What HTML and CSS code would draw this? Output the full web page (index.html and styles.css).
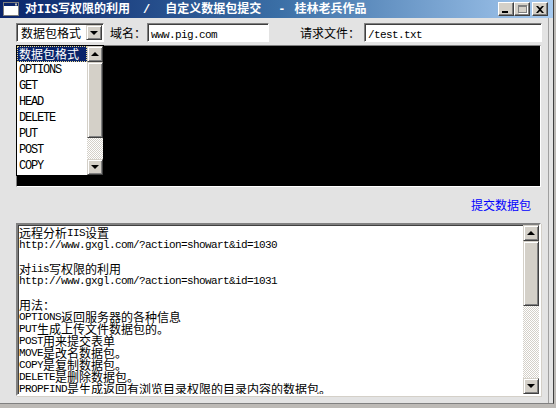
FILE: index.html
```html
<!DOCTYPE html>
<html lang="zh-CN">
<head>
    <meta charset="UTF-8">
    <title>对IIS写权限的利用</title>
    <link rel="stylesheet" href="styles.css">
</head>
<body>
    <div class="window">
        <div class="titlebar">
            <svg class="app-icon" width="16" height="14" viewBox="0 0 16 14">
                <rect x="0.5" y="0.5" width="15" height="13" fill="#fff" stroke="#808080"/>
                <rect x="1" y="1" width="14" height="3" fill="#0a246a"/>
                <rect x="12" y="1.5" width="2" height="2" fill="#c0c0c0"/>
            </svg>
            <div class="title-text">对<span class="en">IIS</span>写权限的利用<span class="slash">/</span>自定义数据包提交<span class="dash">-</span>桂林老兵作品</div>
            <div class="caption-btns">
                <span class="cbtn btn-min"><i></i></span>
                <span class="cbtn btn-max"><i></i></span>
                <span class="cbtn btn-close">
                    <svg width="8" height="7" viewBox="0 0 8 7"><path d="M0 0h2l2 2 2-2h2L5 3.5 8 7H6L4 5 2 7H0l3-3.5z" fill="#000"/></svg>
                </span>
            </div>
        </div>

        <div class="client">
            <div class="toolbar">
                <div class="combo">
                    <span class="combo-text">数据包格式</span>
                    <span class="combo-btn"><i class="arrow-down"></i></span>
                    <div class="combo-list">
                        <ul>
                            <li class="selected">数据包格式</li>
                            <li class="m">OPTIONS</li>
                            <li class="m">GET</li>
                            <li class="m">HEAD</li>
                            <li class="m">DELETE</li>
                            <li class="m">PUT</li>
                            <li class="m">POST</li>
                            <li class="m">COPY</li>
                        </ul>
                        <div class="vscroll">
                            <span class="sbtn"><i class="arrow-up"></i></span>
                            <span class="thumb list-thumb"></span>
                            <span class="track"></span>
                            <span class="sbtn"><i class="arrow-down"></i></span>
                        </div>
                    </div>
                </div>
                <label class="lbl lbl-host">域名：</label>
                <div class="field field-host"><span class="m">www.pig.com</span></div>
                <label class="lbl lbl-file">请求文件：</label>
                <div class="field field-file"><span class="m">/test.txt</span></div>
            </div>

            <div class="screen"></div>

            <div class="actions">
                <a href="javascript:;" class="submit">提交数据包</a>
            </div>

            <div class="output">
                <div class="lines">
                    <div class="line">远程分析<span class="m">IIS</span>设置</div>
                    <div class="line"><span class="m">http://www.gxgl.com/?action=showart&amp;id=1030</span></div>
                    <div class="line"></div>
                    <div class="line">对<span class="m">iis</span>写权限的利用</div>
                    <div class="line"><span class="m">http://www.gxgl.com/?action=showart&amp;id=1031</span></div>
                    <div class="line"></div>
                    <div class="line">用法：</div>
                    <div class="line"><span class="m">OPTIONS</span>返回服务器的各种信息</div>
                    <div class="line"><span class="m">PUT</span>生成上传文件数据包的。</div>
                    <div class="line"><span class="m">POST</span>用来提交表单</div>
                    <div class="line"><span class="m">MOVE</span>是改名数据包。</div>
                    <div class="line"><span class="m">COPY</span>是复制数据包。</div>
                    <div class="line"><span class="m">DELETE</span>是删除数据包。</div>
                    <div class="line"><span class="m">PROPFIND</span>是生成返回有浏览目录权限的目录内容的数据包。</div>
                </div>
                <div class="vscroll">
                    <span class="sbtn"><i class="arrow-up"></i></span>
                    <span class="thumb out-thumb"></span>
                    <span class="track"></span>
                    <span class="sbtn"><i class="arrow-down"></i></span>
                </div>
            </div>
        </div>
    </div>
</body>
</html>
```

FILE: styles.css
```css
* {
    padding: 0;
    margin: 0;
    box-sizing: border-box;
}

ul,
li {
    list-style: none;
}

a {
    text-decoration: none;
}

body {
    width: 556px;
    height: 408px;
    overflow: hidden;
    background: #bdbab6;
    font: 12px "Noto Sans CJK SC", "Noto Sans", sans-serif;
    color: #000;
}

.m {
    font-family: "Liberation Mono", "DejaVu Sans Mono", monospace;
    font-size: 11px;
    letter-spacing: -0.6px;
}

.window {
    width: 554px;
    height: 404px;
    display: flex;
    flex-direction: column;
    background: #e3e3e3;
    border-right: 1px solid #404040;
    border-bottom: 1px solid #808080;
}

/* 标题栏 */
.titlebar {
    height: 18px;
    display: flex;
    align-items: center;
    padding: 0 5px 0 3px;
    background: linear-gradient(to right, #0a246a 0%, #3a6ea5 50%, #a6caf0 100%);
    color: #fff;
    font-weight: bold;
}

.app-icon {
    flex: none;
}

.title-text {
    margin-left: 6px;
    flex: 1;
    white-space: nowrap;
    line-height: 18px;
}

.title-text .en {
    font-family: "Liberation Mono", monospace;
    font-size: 12px;
    letter-spacing: -0.2px;
}

.title-text .slash {
    font-family: "Liberation Mono", monospace;
    margin: 0 15px 0 13px;
}

.title-text .dash {
    font-family: "Liberation Mono", monospace;
    margin: 0 9px 0 17px;
}

.caption-btns {
    display: flex;
}

.cbtn {
    width: 16px;
    height: 14px;
    background: #d4d0c8;
    border: 1px solid;
    border-color: #fff #404040 #404040 #fff;
    box-shadow: inset -1px -1px #808080;
    display: flex;
    align-items: center;
    justify-content: center;
}

.btn-close {
    margin-left: 2px;
}

.btn-min i {
    width: 6px;
    height: 2px;
    background: #000;
    margin-top: 6px;
    margin-left: -2px;
}

.btn-max i {
    width: 9px;
    height: 8px;
    border: 1px solid #808080;
    border-top-width: 2px;
    box-shadow: 1px 1px #fff;
}

/* 客户区 */
.client {
    flex: 1;
    padding: 5px 0 0 16px;
    border-left: 3px solid #f1e8e8;
    margin-left: -3px;
    border-right: 1px solid #a0a0a0;
    margin-right: 4px;
}

.toolbar {
    display: flex;
    align-items: center;
    height: 19px;
    position: relative;
    z-index: 5;
}

.combo {
    width: 88px;
    height: 19px;
    position: relative;
    background: #fff;
    border: 1px solid;
    border-color: #808080 #fff #fff #808080;
    box-shadow: inset 1px 1px #404040;
    display: flex;
    align-items: center;
}

.combo-text {
    padding-left: 4px;
    flex: 1;
    line-height: 17px;
}

.combo-btn {
    width: 16px;
    height: 15px;
    margin-right: 1px;
    background: #d4d0c8;
    border: 1px solid;
    border-color: #d4d0c8 #404040 #404040 #d4d0c8;
    box-shadow: inset 1px 1px #fff, inset -1px -1px #808080;
    display: flex;
    align-items: center;
    justify-content: center;
}

.arrow-down,
.arrow-up {
    width: 0;
    height: 0;
    border-left: 4px solid transparent;
    border-right: 4px solid transparent;
}

.arrow-down {
    border-top: 4px solid #000;
}

.arrow-up {
    border-bottom: 4px solid #000;
}

.combo-list {
    position: absolute;
    left: -1px;
    top: 21px;
    width: 88px;
    height: 131px;
    background: #fff;
    border: 1px solid #000;
    display: flex;
}

.combo-list ul {
    flex: 1;
}

.combo-list li {
    height: 16px;
    line-height: 16px;
    padding-left: 2px;
}

.combo-list li.m {
    font-size: 12px;
    letter-spacing: -1.2px;
}

.combo-list li.selected {
    background: #0a246a;
    color: #fff;
    border: 1px dotted #e8d890;
    line-height: 14px;
    padding-left: 1px;
}

.vscroll {
    width: 16px;
    display: flex;
    flex-direction: column;
}

.sbtn,
.thumb {
    background: #d4d0c8;
    border: 1px solid;
    border-color: #d4d0c8 #404040 #404040 #d4d0c8;
    box-shadow: inset 1px 1px #fff, inset -1px -1px #808080;
}

.sbtn {
    height: 16px;
    display: flex;
    align-items: center;
    justify-content: center;
}

.list-thumb {
    height: 76px;
}

.out-thumb {
    height: 65px;
}

.track {
    flex: 1;
    background-color: #fff;
    background-image: repeating-conic-gradient(#d4d0c8 0 25%, #fff 0 50%);
    background-size: 2px 2px;
}

.lbl {
    white-space: nowrap;
}

.lbl-host {
    margin-left: 6px;
    width: 37px;
}

.lbl-file {
    margin-left: 31px;
    width: 64px;
}

.field {
    height: 19px;
    background: #fff;
    border: 1px solid;
    border-color: #808080 #fff #fff #808080;
    box-shadow: inset 1px 1px #404040;
    padding-left: 3px;
    line-height: 17px;
}

.field-host {
    width: 122px;
}

.field-file {
    width: 178px;
}

.screen {
    margin-top: 3px;
    width: 525px;
    height: 142px;
    background: #000;
    border: 1px solid;
    border-color: #808080 #fff #fff #808080;
}

.actions {
    width: 525px;
    height: 36px;
    padding: 11px 10px 0 0;
    display: flex;
    justify-content: flex-end;
}

.submit {
    color: #0000ff;
    line-height: 14px;
    height: 14px;
}

.output {
    width: 525px;
    height: 173px;
    background: #fff;
    border: 2px solid;
    border-color: #808080 #fff #fff #808080;
    box-shadow: inset 1px 1px #404040, 1px 1px #d4d0c8;
    display: flex;
}

.lines {
    flex: 1;
    padding: 2px 0 0 1px;
    overflow: hidden;
}

.line {
    height: 12px;
    line-height: 12px;
    white-space: nowrap;
    display: flex;
    align-items: center;
}

.line .m {
    line-height: 12px;
    font-size: 11px;
}
```
